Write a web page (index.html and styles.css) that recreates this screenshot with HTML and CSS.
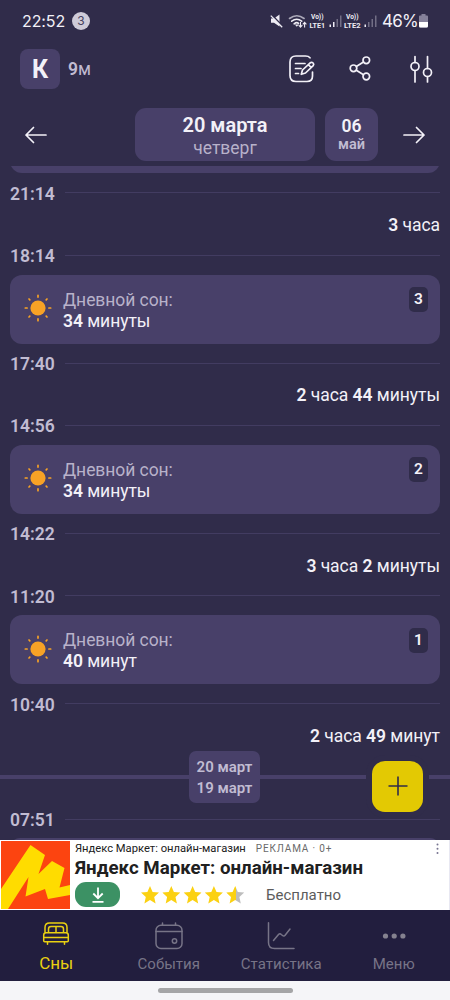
FILE: index.html
```html
<!DOCTYPE html>
<html lang="ru">
<head>
<meta charset="utf-8">
<title>Дневник сна</title>
<link rel="stylesheet" href="styles.css">
</head>
<body>
<svg class="defs" width="0" height="0">
  <symbol id="sun" viewBox="0 0 28 28">
    <circle cx="14" cy="14" r="7.600" fill="#f7a226"/>
    <g stroke="#f7a226" stroke-width="1.700" stroke-linecap="round">
      <path d="M14 1.300v1.800M14 24.900v1.800M1.300 14h1.800M24.900 14h1.800M5 5l.8.8M22.200 22.200l.8.8M5 23l.8-.8M22.200 5.800l.8-.8"/>
    </g>
  </symbol>
  <symbol id="star" viewBox="0 0 18 18"><path d="M9 0l2.600 6 6.400.6-4.800 4.300 1.400 6.500L9 14l-5.600 3.400 1.400-6.500L0 6.600 6.400 6z"/></symbol>
</svg>
<header class="status">
  <span class="clock">22:52</span><span class="count">3</span>
  <svg class="status-icons" width="108" height="20" viewBox="0 0 108 20">
    <path d="M1 7.500h3L9.500 3.500v12l-5.500-3.800H1z" fill="#eeecf4"/><path d="M1.500 3.500l12 12.500" stroke="#302c4a" stroke-width="1.600"/><path d="M.8 4.600l11.400 11.600" stroke="#eeecf4" stroke-width="1.300"/>
    <g fill="none" stroke="#eeecf4" stroke-width="1.600" stroke-linecap="round">
      <path d="M19.500 7.500q7.300-5.600 14.600 0" opacity=".65"/><path d="M21.700 10.200q5-3.900 10 0M24.100 12.800q2.700-2 4.400-.4"/>
    </g>
    <path d="M26.800 15.800l-2-2.200h4z" fill="#eeecf4"/>
    <path d="M30.500 11v5m-1.800-1.800l1.800 2 1.800-2M34.600 16.500v-5m-1.800 1.800l1.800-2 1.800 2" fill="none" stroke="#eeecf4" stroke-width="1.100"/>
    <g fill="#eeecf4"><path d="M59.500 13.500H61V16h-1.500zM63 11h1.500v5H63z"/><path d="M66.500 8H68v8h-1.500zM70 4.500h1.500V16H70z" opacity=".35"/><path d="M94.500 13.500H96V16h-1.500z"/><path d="M98 11h1.500v5H98zM101.500 8h1.500v8h-1.500zM105 4.500h1.500V16H105z" opacity=".35"/></g>
    <g class="lte"><text x="41" y="8" textLength="12.500" lengthAdjust="spacingAndGlyphs">Vo))</text><text x="39.500" y="16.500" textLength="15.500" lengthAdjust="spacingAndGlyphs">LTE1</text><text x="76" y="8" textLength="12.500" lengthAdjust="spacingAndGlyphs">Vo))</text><text x="74" y="16.500" textLength="16.500" lengthAdjust="spacingAndGlyphs">LTE2</text></g>
  </svg>
  <span class="percent">46%</span>
  <svg class="battery" width="9" height="14" viewBox="0 0 9 14"><path d="M2.500 0h4v1.500H8q1 0 1 1V12q0 1.500-1.500 1.500h-6Q0 13.500 0 12V2.500q0-1 1-1h1.500z" fill="#85819a"/><path d="M0 8h9v4q0 1.500-1.500 1.500h-6Q0 13.500 0 12z" fill="#fff"/></svg>
</header>
<section class="profile">
  <span class="avatar">К</span><span class="age"><b>9</b>м</span>
  <div class="actions">
    <svg width="28" height="30" viewBox="0 0 28 30"><path d="M22 3.800Q20.500 2 17.500 2H8Q2 2 2 8v13.500q0 6 6 6h11q5.500 0 5.500-5.500v-4M7.500 9.500h9.500M7.500 14.500h5.500M7.500 19.500h3M13.300 20.300l1.200-4.300 7.700-7.200q1.500-1.100 2.900.2 1.200 1.300.1 2.700L17.500 19zM20.500 10.800l2.700 2.600"/></svg>
    <svg width="24" height="28" viewBox="0 0 24 28"><circle cx="18.300" cy="5.300" r="3.300"/><circle cx="5.500" cy="13.300" r="3.300"/><circle cx="18.300" cy="21.500" r="3.300"/><path d="M8.300 11.500L15.500 7M8.300 15.200l7.200 4.500"/></svg>
    <svg width="24" height="30" viewBox="0 0 24 30"><circle cx="6" cy="12.500" r="4"/><circle cx="18.500" cy="18.500" r="4"/><path d="M6 2.500v6M6 16.500v11.500M18.500 2.500v12M18.500 22.500v5.500"/></svg>
  </div>
</section>
<nav class="dates">
  <svg class="arrow" width="24" height="20" viewBox="0 0 24 20"><path d="M22 10H2M9.500 2.500L2 10l7.500 7.500"/></svg>
  <div class="day"><b>20 марта</b><span>четверг</span></div>
  <div class="month"><b>06</b><span>май</span></div>
  <svg class="arrow" width="24" height="20" viewBox="0 0 24 20"><path d="M2 10h20M14.500 2.500L22 10l-7.500 7.500"/></svg>
</nav>
<main class="timeline">
  <div class="card-end"><i></i></div>
  <div class="time">21:14</div>
  <div class="gap"><p><b>3</b> часа</p></div>
  <div class="time">18:14</div>
  <article class="card"><svg class="sun"><use href="#sun"/></svg><div class="info"><span>Дневной сон:</span><p><b>34</b> минуты</p></div><span class="num">3</span></article>
  <div class="time">17:40</div>
  <div class="gap"><p><b>2</b> часа <b>44</b> минуты</p></div>
  <div class="time">14:56</div>
  <article class="card"><svg class="sun"><use href="#sun"/></svg><div class="info"><span>Дневной сон:</span><p><b>34</b> минуты</p></div><span class="num">2</span></article>
  <div class="time">14:22</div>
  <div class="gap"><p><b>3</b> часа <b>2</b> минуты</p></div>
  <div class="time">11:20</div>
  <article class="card"><svg class="sun"><use href="#sun"/></svg><div class="info"><span>Дневной сон:</span><p><b>40</b> минут</p></div><span class="num">1</span></article>
  <div class="time">10:40</div>
  <div class="gap"><p><b>2</b> часа <b>49</b> минут</p></div>
  <div class="divider"><i></i><div class="midnight"><span>20 март</span><span>19 март</span></div><i></i></div>
  <div class="time last">07:51</div>
  <div class="card-start"></div>
  <button class="fab" aria-label="Добавить"><svg width="20" height="20" viewBox="0 0 20 20"><path d="M10 .5v19M.5 10h19"/></svg></button>
</main>
<aside class="ad">
  <svg class="ad-logo" width="69" height="68" viewBox="0 0 69 68"><path fill="#fc4410" d="M0 0h69v68H0z"/><path fill="#ffdc00" d="M0 48L29.500 4 44 14l-6.500 19L51 20l12.500 7-5 19.500L69 44v10l-22 4-3-10-19.500 7.500L27.500 36 7 68H0z"/></svg>
  <div class="ad-body">
    <div class="ad-top"><span>Яндекс Маркет: онлайн-магазин</span><small>РЕКЛАМА · 0+</small></div>
    <h2>Яндекс Маркет: онлайн-магазин</h2>
    <div class="ad-row">
      <span class="download"><svg width="14" height="16" viewBox="0 0 14 16"><path d="M7 .5v10.500M2.300 6.500L7 11.200l4.700-4.700M1.500 14.800h11"/></svg></span>
      <svg class="stars" width="105" height="18" viewBox="0 0 105 18"><defs><linearGradient id="half"><stop offset=".52" stop-color="#fbd112"/><stop offset=".52" stop-color="#bdbdbd"/></linearGradient></defs><g fill="#fbd112"><use href="#star" width="18" height="18"/><use href="#star" x="21.300" width="18" height="18"/><use href="#star" x="42.600" width="18" height="18"/><use href="#star" x="63.900" width="18" height="18"/></g><use href="#star" x="85.200" width="18" height="18" fill="url(#half)"/></svg>
      <span class="free">Бесплатно</span>
    </div>
  </div>
  <svg class="dots" width="3" height="12" viewBox="0 0 3 12"><g fill="#777491"><circle cx="1.500" cy="1.500" r="1"/><circle cx="1.500" cy="5.700" r="1"/><circle cx="1.500" cy="10" r="1"/></g></svg>
</aside>
<nav class="tabs">
  <a class="tab active"><svg width="28" height="26" viewBox="0 0 28 26"><path d="M3 10.700V5.500Q3 1 7.500 1h13Q25 1 25 5.500v5.200M6.500 10.700V7Q6.500 4.500 9 4.500h10q2.500 0 2.500 2.500v3.700M14 4.500v6.200M4 10.700h20q2.300 0 2.300 2.500v5.500q0 1-1 1H2.700q-1 0-1-1v-5.500q0-2.500 2.300-2.500zM1.700 15.500h24.600M5.500 19.700v2.500M22.500 19.700v2.500"/></svg><span>Сны</span></a>
  <a class="tab"><svg width="28" height="28" viewBox="0 0 28 28"><rect x="1" y="3.300" width="26" height="23.200" rx="5"/><path d="M1 9.500h26M7.500 1v2.300M20.500 1v2.300"/><circle cx="19.500" cy="19" r="2.200"/></svg><span>События</span></a>
  <a class="tab"><svg width="28" height="28" viewBox="0 0 28 28"><path d="M1.500.8v19.700q0 6 6 6H27M6.500 18.500l5-6q1.400-1.500 2.800 0l1.200 1q1.400 1.200 2.600-.3L23 7"/></svg><span>Статистика</span></a>
  <a class="tab"><svg width="28" height="28" viewBox="0 0 28 28"><g class="solid"><circle cx="5.500" cy="14" r="2.600"/><circle cx="14.200" cy="14" r="2.600"/><circle cx="22.900" cy="14" r="2.600"/></g></svg><span>Меню</span></a>
</nav>
<footer class="home"><i></i></footer>
</body>
</html>
```

FILE: styles.css
```css
* { box-sizing: border-box; }
body { margin: 0; width: 450px; height: 1000px; overflow: hidden; display: flex; flex-direction: column; background: #302c4a; color: #f3f1f8; font-family: Roboto, sans-serif; }
p, h2 { margin: 0; }
b { font-weight: 600; }
svg { display: block; flex: none; }
.defs { position: absolute; }
.status { height: 41px; flex: none; display: flex; align-items: center; padding: 0 22px; font-family: Inter, sans-serif; }
.clock { font-size: 16px; width: 50px; white-space: nowrap; letter-spacing: -.1px; }
.count { width: 18px; height: 18px; border-radius: 50%; background: #cecbd8; color: #45415c; font-size: 12px; line-height: 18px; text-align: center; }
.status-icons { margin-left: auto; margin-right: 4px; }
.lte text { font: 700 7.500px Roboto, sans-serif; fill: #eeecf4; }
.percent { font-size: 17px; width: 37px; letter-spacing: -.8px; white-space: nowrap; }
.profile { height: 56px; flex: none; display: flex; align-items: center; padding: 0 17.500px 0 20px; }
.avatar { width: 40px; height: 40px; border-radius: 8px; background: #484069; font-size: 25px; font-weight: 700; line-height: 41px; text-align: center; }
.age { margin-left: 8px; font-size: 17.500px; color: #c1bcd2; }
.actions { margin-left: auto; display: flex; align-items: center; gap: 37px; }
.actions svg, .arrow { fill: none; stroke: #f3f1f8; stroke-width: 1.700; stroke-linecap: round; stroke-linejoin: round; }
.actions svg:first-child { margin-right: -5px; }
.dates { height: 69px; flex: none; display: flex; align-items: flex-start; padding: 11px 24px 0; }
.arrow { margin-top: 16.500px; }
.day, .month { height: 53px; border-radius: 11px; background: #484069; display: flex; flex-direction: column; align-items: center; }
.day { width: 180px; margin-left: 87px; margin-right: 10px; padding-top: 5px; }
.day b { font-size: 20px; line-height: 25px; }
.day span { font-size: 17.500px; line-height: 20px; color: #b8b2ca; }
.month { width: 53px; margin-right: 24px; padding-top: 8px; }
.month b { font-size: 17.500px; line-height: 20px; }
.month span { font-size: 14.500px; line-height: 18px; font-weight: 600; color: #c1bcd2; }
.timeline { position: relative; height: 674px; flex: none; overflow: hidden; padding: 0 10px; }
.card-end { height: 7.200px; overflow: hidden; display: flex; align-items: flex-end; }
.card-end i { flex: 1; height: 30px; background: #484069; border-radius: 12px; }
.time { height: 39px; padding-top: 2px; display: flex; align-items: center; gap: 10px; font-size: 17.500px; font-weight: 600; color: #c1bcd2; }
.time::after { content: ""; flex: 1; height: 1px; margin-top: -2px; background: #423c61; }
.gap { height: 23.400px; padding-top: 2px; display: flex; align-items: center; justify-content: flex-end; font-size: 17.500px; letter-spacing: -.04px; }
.card { height: 69px; border-radius: 12px; background: #484069; display: flex; padding: 0 12px 0 13.500px; }
.sun { width: 28px; height: 28px; margin-top: 19.500px; }
.info { margin-left: 11.500px; padding-top: 15px; font-size: 17.500px; line-height: 21px; letter-spacing: -.06px; }
.info span { color: #b8b2ca; }
.num { margin: 12.500px 0 0 auto; width: 19px; height: 25px; border-radius: 5px; background: #302c4a; color: #f3f1f8; font-size: 15.500px; line-height: 25.500px; font-weight: 600; text-align: center; }
.divider { margin: 4px -10px 0; height: 52px; display: flex; align-items: center; }
.divider i { flex: 1; height: 4px; background: #484069; }
.divider i:first-child { flex: none; width: 189px; }
.midnight { width: 71px; height: 52px; border-radius: 7px; background: #484069; display: flex; flex-direction: column; align-items: center; padding-top: 6px; font-size: 15px; line-height: 21.500px; font-weight: 600; color: #c1bcd2; }
.last { height: 34px; padding-top: 0; }
.last::after { margin-top: 0; }
.card-start { height: 20px; margin-top: 1px; border-radius: 12px; background: #484069; }
.fab { position: absolute; left: 372px; top: 594.500px; width: 51px; height: 51px; padding: 0; border: 0; border-radius: 13px; background: #e3c903; display: flex; align-items: center; justify-content: center; box-shadow: 0 0 0 6px #302c4a; }
.fab svg { fill: none; stroke: #302c4a; stroke-width: 1.600; }
.ad { height: 70px; flex: none; display: flex; background: #fff; padding: 1px; color: #202020; border-right: 1px solid #e8e8f2; }
.ad-body { flex: 1; padding-left: 5px; }
.ad-top { display: flex; align-items: center; gap: 10px; height: 14px; font-size: 11.200px; white-space: nowrap; }
.ad-top small { font-size: 10px; letter-spacing: .85px; color: #6a6a6a; }
.ad h2 { font-size: 18.700px; line-height: 27px; font-weight: 700; white-space: nowrap; }
.ad-row { display: flex; align-items: center; height: 25px; }
.download { width: 45px; height: 25px; border-radius: 11px; background: #3c9164; display: flex; align-items: center; justify-content: center; }
.download svg { fill: none; stroke: #fff; stroke-width: 1.800; }
.stars { margin-left: 20.500px; }
.free { margin-left: 20.500px; font-size: 15px; color: #5c5c5c; }
.dots { margin: 2px 9px 0 0; }
.tabs { height: 71px; flex: none; display: flex; background: #221e3e; }
.tab { flex: 1; display: flex; flex-direction: column; align-items: center; padding-top: 12px; color: #777487; font-size: 15px; line-height: 22px; }
.tab svg { height: 28px; fill: none; stroke: #777487; stroke-width: 1.500; stroke-linecap: round; stroke-linejoin: round; }
.tab span { margin-top: 3px; }
.tab .solid { fill: #85828f; stroke: none; }
.active { color: #ead111; font-size: 17px; }
.active svg { height: 26px; margin-bottom: 2px; stroke: #ead111; }
.active span { margin-top: 2px; }
.home { flex: 1; background: #f5f5f8; display: flex; justify-content: center; padding-top: 7px; }
.home i { width: 135px; height: 5px; border-radius: 3px; background: #a5a5a7; }
```
